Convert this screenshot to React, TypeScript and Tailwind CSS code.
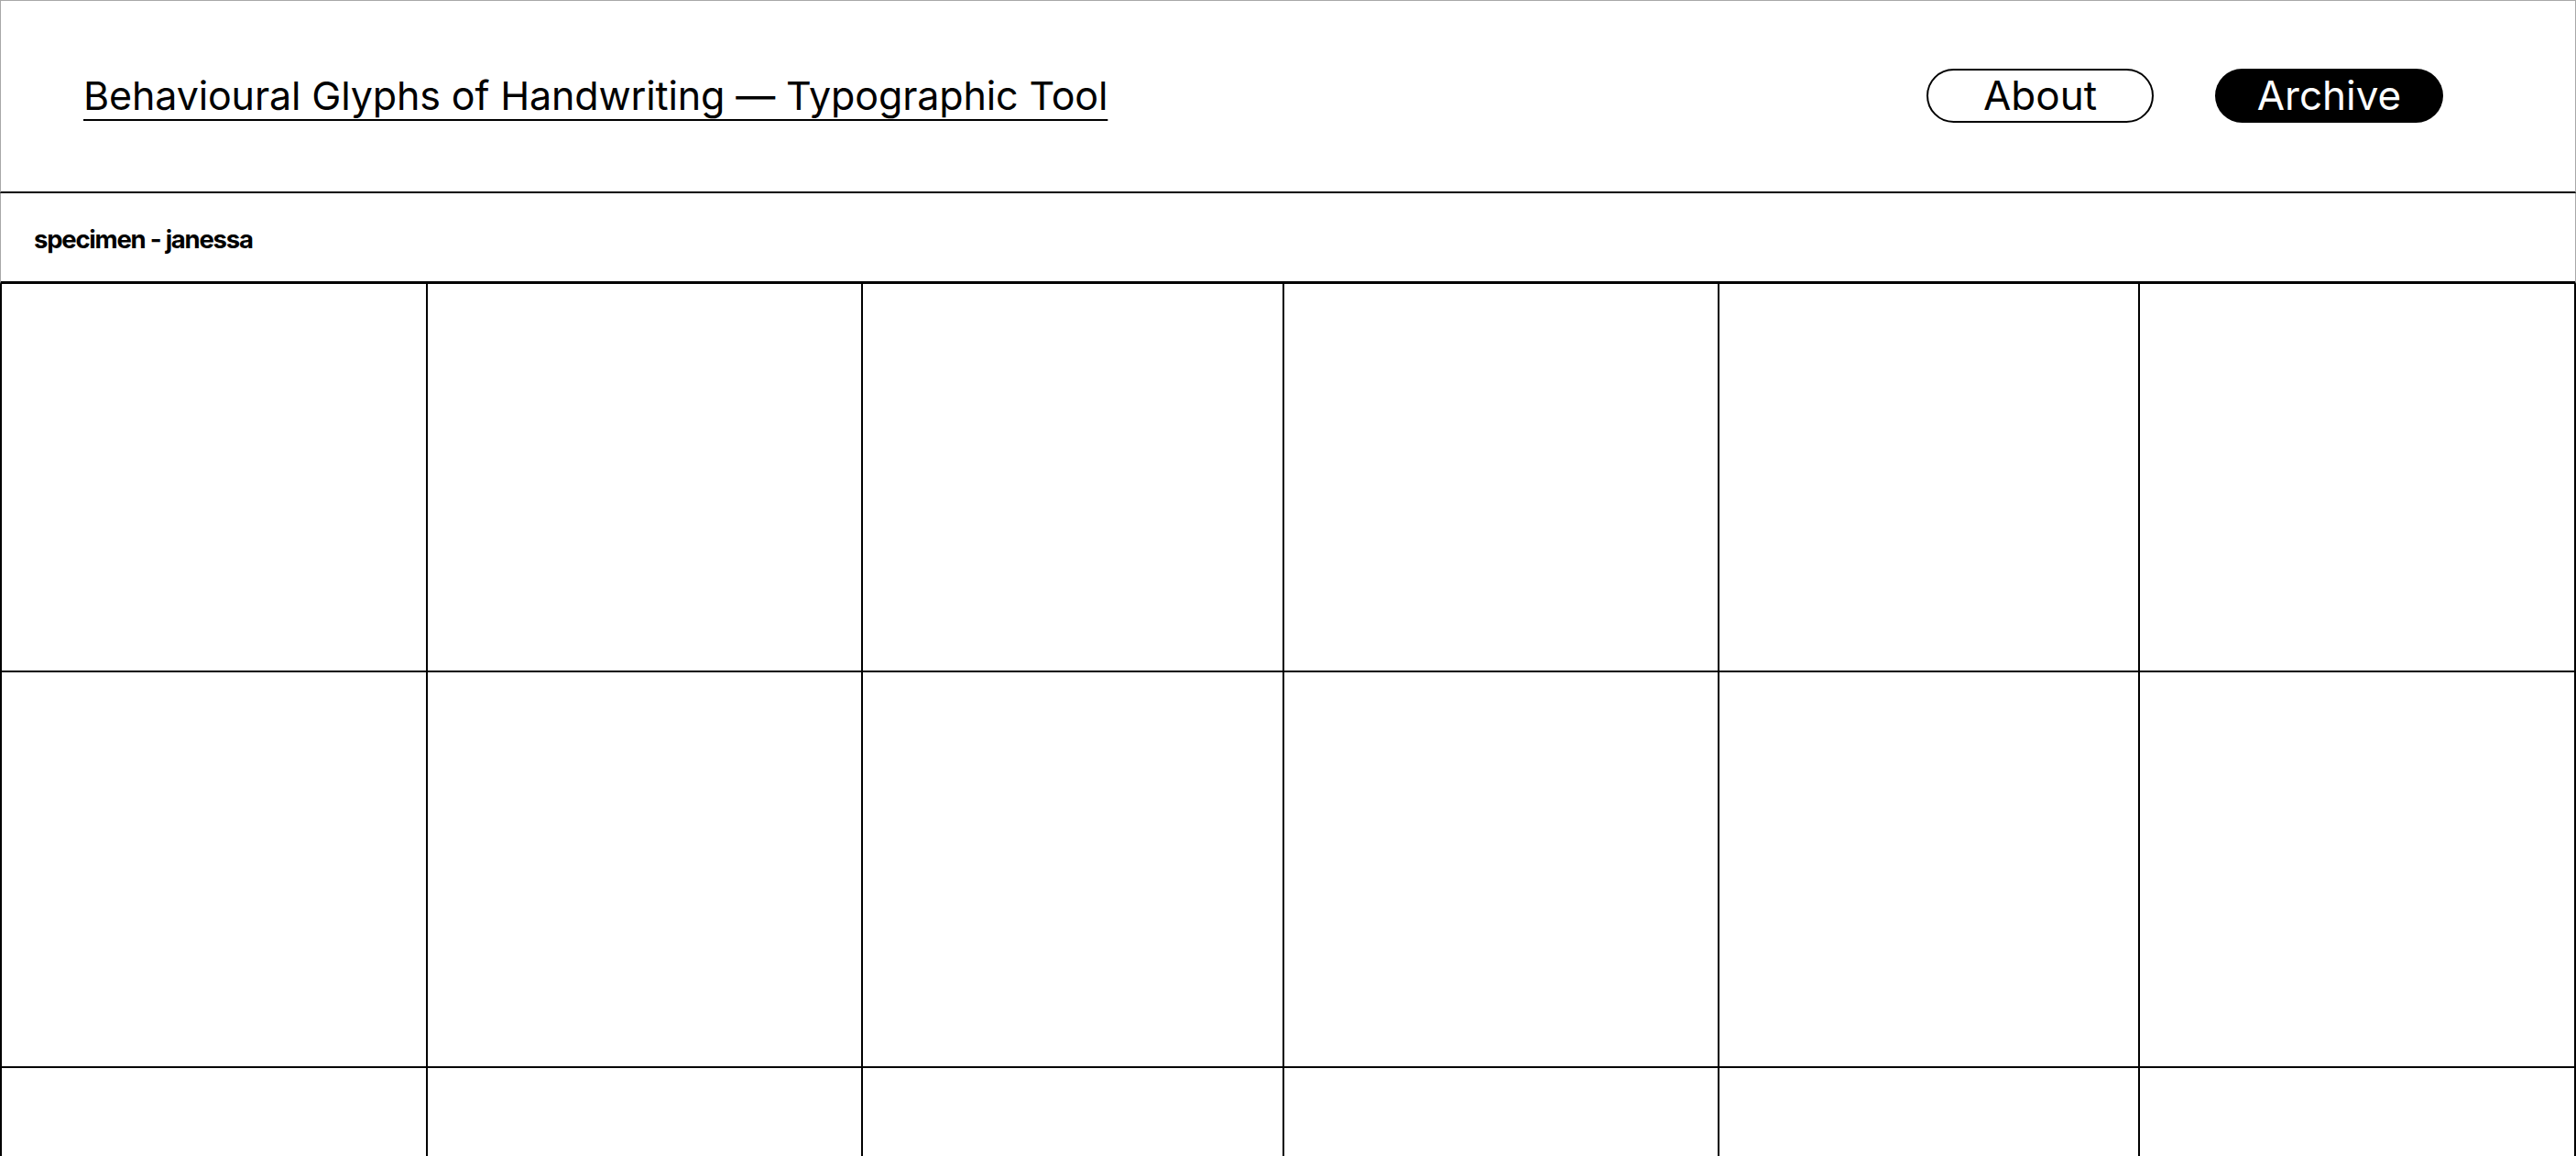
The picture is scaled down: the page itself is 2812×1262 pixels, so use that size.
import React from 'react';

// Column widths and row heights of the specimen grid, taken from the design
const columns = 6;
const rows = [424, 432, 440];

// A single empty glyph cell in the specimen grid
const GlyphCell: React.FC<{ height: number }> = ({ height }) => (
  <div className="border-r-2 border-b-2 border-black bg-white" style={{ height }} />
);

const App: React.FC = () => {
  return (
    <div className="w-[2812px] h-[1262px] overflow-hidden bg-white text-black font-['Inter','Liberation_Sans',sans-serif]">
      {/* Header with title and navigation */}
      <header className="h-[211px] flex items-center justify-between pl-[90px] pr-[144px] pb-[2px] border-t border-x border-[#a8a8a8] border-b-2 border-b-black">
        <h1 className="text-[43px] font-normal leading-none tracking-[-0.003em] underline decoration-2 underline-offset-[10px]">
          Behavioural Glyphs of Handwriting — Typographic Tool
        </h1>
        <nav className="flex items-center gap-[67px]">
          <button className="w-[248px] h-[59px] rounded-full border-2 border-black text-[44px] leading-none flex items-center justify-center">
            About
          </button>
          <button className="w-[249px] h-[59px] rounded-full bg-black text-white text-[44px] leading-none flex items-center justify-center">
            Archive
          </button>
        </nav>
      </header>

      {/* Current specimen label */}
      <div className="h-[99px] flex items-center px-[36px] pt-[6px] border-x border-[#a8a8a8] border-b-[3px] border-b-black">
        <span className="text-[27.5px] font-bold tracking-[-0.045em] leading-none">specimen - janessa</span>
      </div>

      {/* Glyph grid */}
      <div className="grid grid-cols-[465px_475px_460px_475px_459px_1fr] border-l-2 border-black">
        {rows.map((h, r) =>
          Array.from({ length: columns }).map((_, c) => <GlyphCell key={`${r}-${c}`} height={h} />)
        )}
      </div>
    </div>
  );
};

export default App;
